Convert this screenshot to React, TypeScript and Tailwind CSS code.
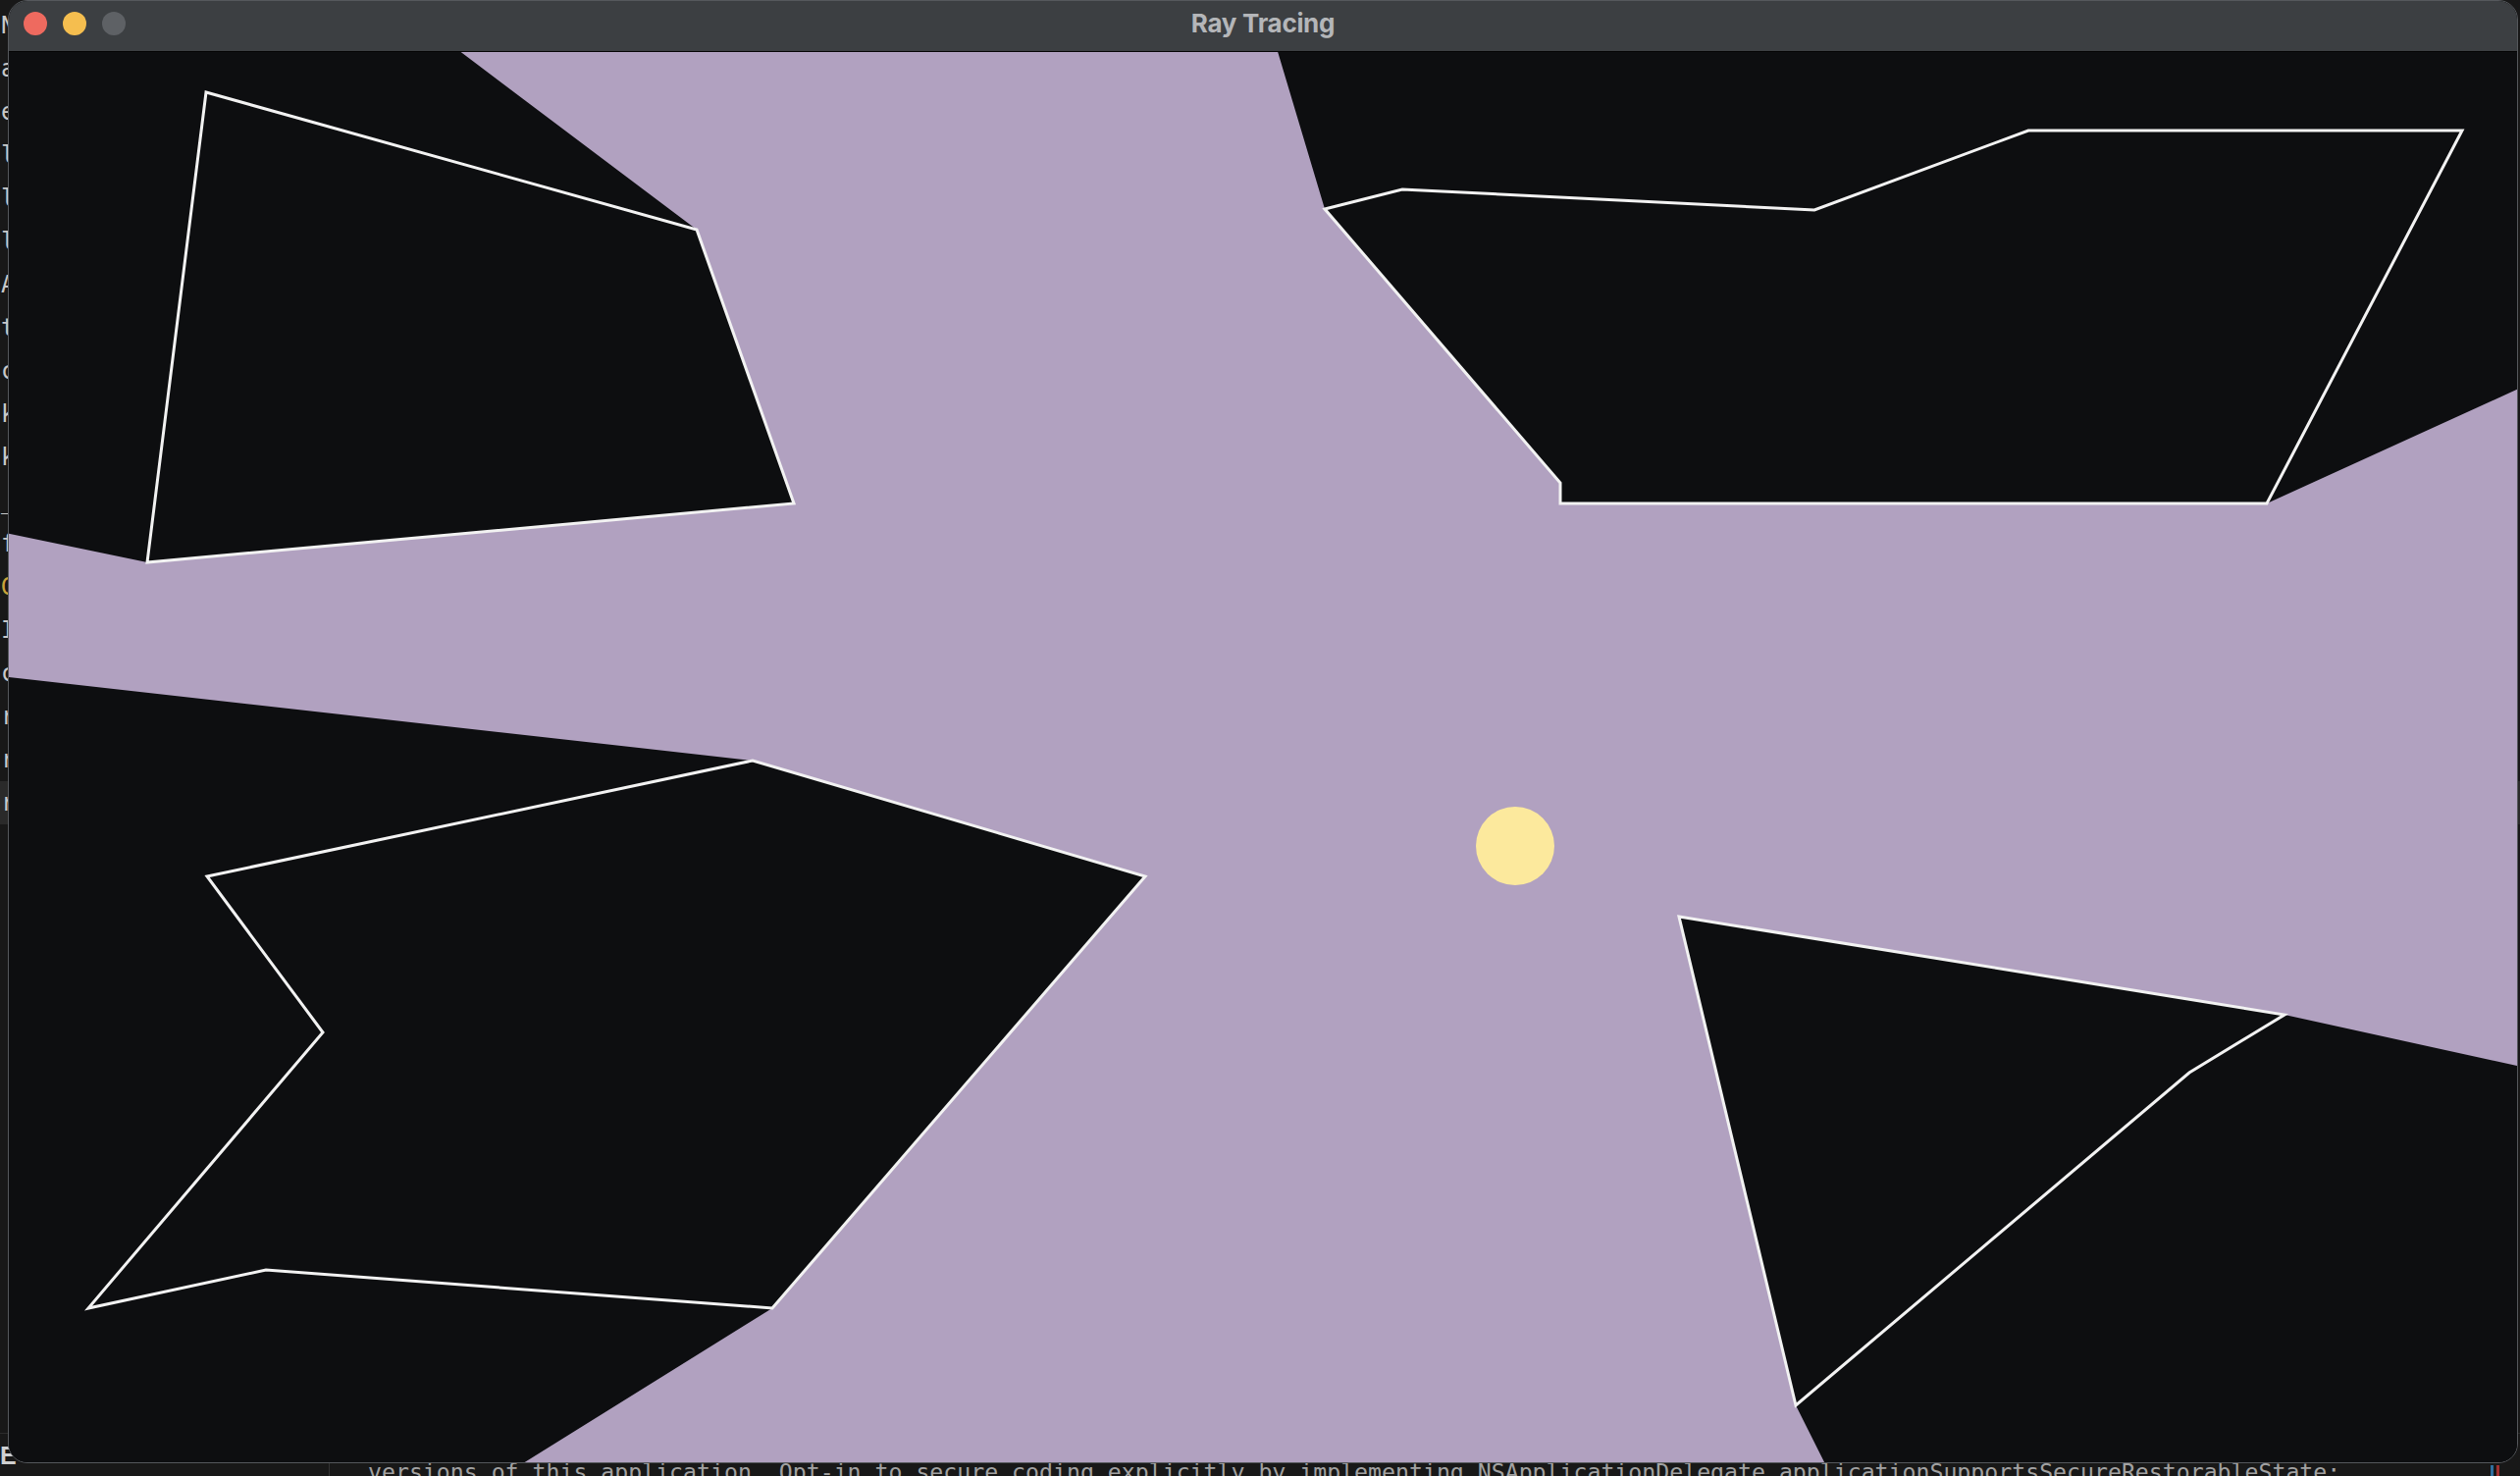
import { useMemo } from "react";

type Pt = [number, number];

// canvas area inside the window, in page pixels
const VX = 9;
const VY = 53;
const VW = 2556;
const VH = 1437;

const light: Pt = [1544, 862];

const shapes: Pt[][] = [
  [[210, 94], [710, 234], [809, 513], [150, 573]],
  [[1350, 213], [1429, 193], [1849, 214], [2067, 133], [2509, 133], [2310, 513], [1590, 513], [1590, 492]],
  [[211, 893], [767, 775], [1167, 893], [787, 1333], [271, 1294], [90, 1333], [329, 1052]],
  [[1711, 934], [2328, 1034], [2231, 1093], [1830, 1432]],
];

const editorChars = ["N", "a", "e", "l", "l", "l", "A", "t", "c", "k", "k", "_", "f", "G", "I", "c", "r", "r", "r"];

// cast a ray towards every corner (and a hair either side), keep the closest hit
function visibility(): Pt[] {
  const box: Pt[] = [[VX, VY], [VX + VW, VY], [VX + VW, VY + VH], [VX, VY + VH]];
  const all = [...shapes, box];
  const segs: [Pt, Pt][] = [];
  for (const poly of all) {
    for (let i = 0; i < poly.length; i++) segs.push([poly[i], poly[(i + 1) % poly.length]]);
  }
  const angles: number[] = [];
  for (const poly of all) {
    for (const p of poly) {
      const a = Math.atan2(p[1] - light[1], p[0] - light[0]);
      angles.push(a - 0.00001, a, a + 0.00001);
    }
  }
  const hits = angles.map((a) => {
    const dx = Math.cos(a);
    const dy = Math.sin(a);
    let best = Infinity;
    for (const [p, q] of segs) {
      const sx = q[0] - p[0];
      const sy = q[1] - p[1];
      const den = dx * sy - dy * sx;
      if (Math.abs(den) < 1e-12) continue;
      const wx = p[0] - light[0];
      const wy = p[1] - light[1];
      const t = (wx * sy - wy * sx) / den;
      const u = (wx * dy - wy * dx) / den;
      if (t > 1e-6 && u >= -1e-9 && u <= 1 + 1e-9 && t < best) best = t;
    }
    return { a, p: [light[0] + dx * best, light[1] + dy * best] as Pt };
  });
  hits.sort((x, y) => x.a - y.a);
  return hits.map((h) => h.p);
}

function Scene() {
  const lit = useMemo(() => visibility(), []);
  const toPts = (ps: Pt[]) => ps.map((p) => `${p[0].toFixed(2)},${p[1].toFixed(2)}`).join(" ");

  return (
    <svg width={VW} height={VH} viewBox={`${VX} ${VY} ${VW} ${VH}`} className="block">
      <rect x={VX} y={VY} width={VW} height={VH} fill="#0d0e10" />
      <polygon points={toPts(lit)} fill="#b1a1c0" />
      {shapes.map((s, i) => (
        <polygon key={i} points={toPts(s)} fill="none" stroke="#f2f2f2" strokeWidth={3} strokeLinejoin="miter" />
      ))}
      <circle cx={light[0]} cy={light[1]} r={40} fill="#fce99d" />
    </svg>
  );
}

export default function App() {
  return (
    <div className="relative w-[2568px] h-[1504px] overflow-hidden bg-[#181818] flex flex-col">
      {/* editor behind the window */}
      <div className="shrink-0 h-[1460px] pt-[4px] font-['DejaVu_Sans_Mono',monospace] text-[24px] text-[#c9c9c9]">
        {editorChars.map((c, i) => (
          <div
            key={i}
            className={i === 18 ? "h-[44px] leading-[44px] bg-[#2a2a2a] pl-[1px]" : "h-[44px] leading-[44px] pl-[1px]"}
          >
            <span className={c === "G" ? "text-[#c9a33a]" : ""}>{c}</span>
          </div>
        ))}
      </div>

      {/* terminal panel */}
      <div className="flex-1 min-h-0 flex border-t border-[#2c2c2c] bg-[#181818] overflow-hidden">
        <div className="shrink-0 w-[336px] border-r border-[#333333] pt-[7px] leading-[30px] text-[25px] font-bold text-[#d0d0d0] font-['Liberation_Sans',sans-serif]">
          E
        </div>
        <div className="flex-1 pl-[39px] pt-[24px] leading-[30px] text-[23.2px] text-[#a2a2a2] whitespace-nowrap font-['DejaVu_Sans_Mono',monospace]">
          versions of this application. Opt-in to secure coding explicitly by implementing NSApplicationDelegate applicationSupportsSecureRestorableState:
        </div>
        <div className="shrink-0 w-[30px] flex gap-[3px] pt-[32px]">
          <div className="w-[3px] h-[12px] bg-[#2f6f9f]" />
          <div className="w-[3px] h-[12px] bg-[#9f3030]" />
        </div>
      </div>

      {/* app window */}
      <div className="absolute left-[8px] top-0 w-[2558px] h-[1491px] rounded-[20px] overflow-hidden border border-[#55585c] bg-[#0d0e10] flex flex-col">
        <div className="relative h-[51px] bg-[#3c3f42] border-b border-[#050505] flex items-center justify-center box-content">
          <div className="absolute left-[15px] top-[11px] flex gap-[16px]">
            <div className="w-[24px] h-[24px] rounded-full bg-[#ee6a5f]" />
            <div className="w-[24px] h-[24px] rounded-full bg-[#f5be4f]" />
            <div className="w-[24px] h-[24px] rounded-full bg-[#5e6165]" />
          </div>
          <span className="pb-[7px] text-[26px] font-bold text-[#b4b6b9] font-['Inter',sans-serif] tracking-[-0.3px]">
            Ray Tracing
          </span>
        </div>
        <Scene />
      </div>
    </div>
  );
}
